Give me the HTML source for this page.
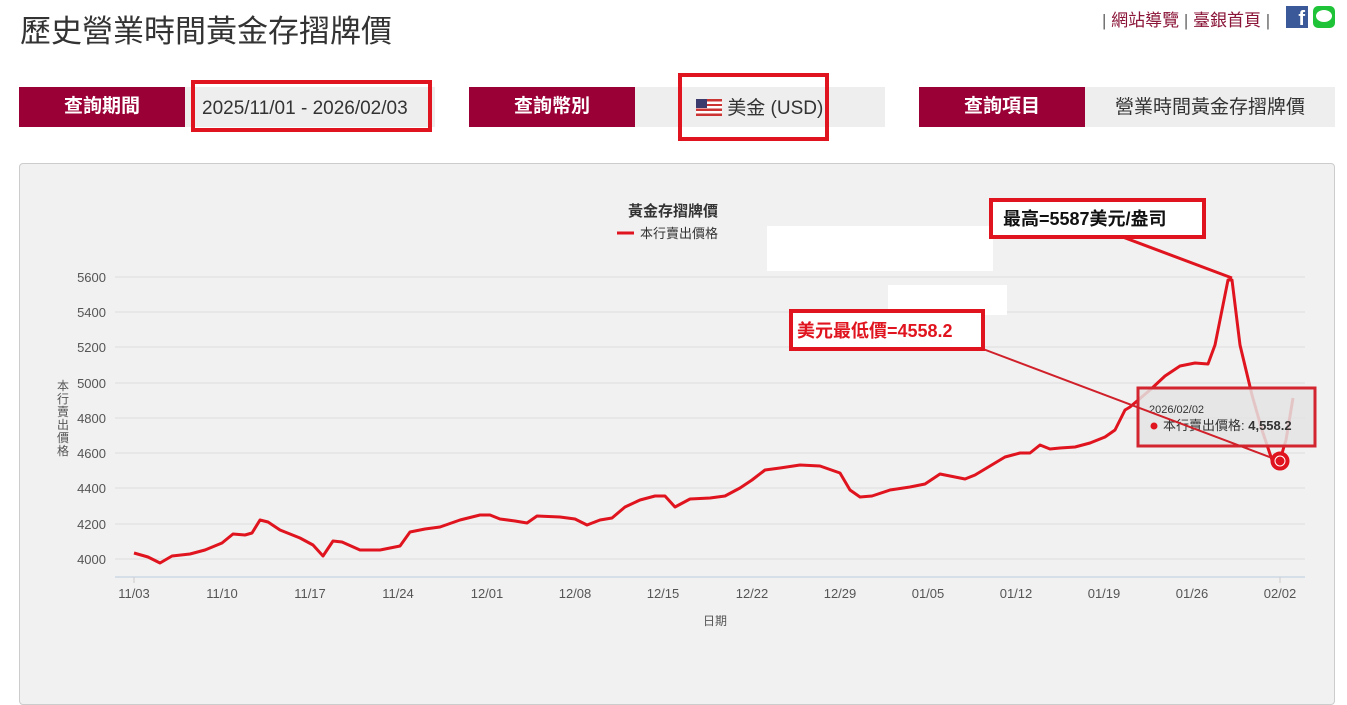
<!DOCTYPE html>
<html><head><meta charset="utf-8"><style>
body{margin:0;width:1347px;height:684px;overflow:hidden;background:#fff;font-family:"Liberation Sans","Noto Sans CJK TC",sans-serif;position:relative}
.a{position:absolute}
.btn{background:#9a0036;color:#fff;font-weight:bold;font-size:19px;text-align:center;line-height:40px;height:40px;width:166px;top:87px}
.fld{background:#eee;height:40px;top:87px;line-height:40px;font-size:19px;color:#333}
.rb{border:4px solid #e0141e;box-sizing:border-box}
</style></head><body>
<div class="a" style="left:20px;top:6px;font-size:31px;color:#333">歷史營業時間黃金存摺牌價</div>
<div class="a" style="left:1102px;top:6px;font-size:17px;color:#8a1538"><span style="color:#666">|</span> 網站導覽 <span style="color:#666">|</span> 臺銀首頁 <span style="color:#666">|</span></div>
<div class="a" style="left:1286px;top:6px;width:22px;height:22px;background:#3b5998;color:#fff;font-weight:bold;font-size:20px;text-align:right;line-height:26px;box-sizing:border-box;padding-right:3px">f</div>
<div class="a" style="left:1313px;top:6px;width:22px;height:22px;background:#1ec337;border-radius:5px"><div style="position:absolute;left:3px;top:4px;width:16px;height:12px;background:#fff;border-radius:50%"></div></div>

<div class="a btn" style="left:19px">查詢期間</div>
<div class="a fld" style="left:185px;width:250px"></div>
<div class="a rb" style="left:191px;top:80px;width:241px;height:52px;font-size:19px;color:#333;line-height:50px;padding-left:7px">2025/11/01 - 2026/02/03</div>
<div class="a btn" style="left:469px">查詢幣別</div>
<div class="a fld" style="left:635px;width:250px"></div>
<div class="a rb" style="left:678px;top:73px;width:151px;height:68px;font-size:19px;color:#333;line-height:64px;padding-left:14px"><span style="display:inline-block;width:26px;height:17px;vertical-align:-2px;background:repeating-linear-gradient(#c33 0 2.4px,#fff 2.4px 4.8px);position:relative"><span style="position:absolute;left:0;top:0;width:11px;height:9px;background:#3c3b6e"></span></span> 美金 (USD)</div>
<div class="a btn" style="left:919px">查詢項目</div>
<div class="a fld" style="left:1085px;width:250px;text-align:center;line-height:42px">營業時間黃金存摺牌價</div>

<div class="a" style="left:19px;top:163px;width:1314px;height:540px;background:#f1f1f1;border:1px solid #ccc;border-radius:4px"></div>
<svg class="a" style="left:0;top:0" width="1347" height="684">
<g font-family="Liberation Sans,Noto Sans CJK TC,sans-serif">
<text x="673" y="216" text-anchor="middle" font-size="15" font-weight="bold" fill="#333">黃金存摺牌價</text>
<line x1="617" y1="233" x2="634" y2="233" stroke="#e0141e" stroke-width="3"/>
<text x="640" y="238" font-size="13" fill="#333">本行賣出價格</text>
<g stroke="#ddd" stroke-width="1">
<line x1="115" y1="277" x2="1305" y2="277"/><line x1="115" y1="312" x2="1305" y2="312"/><line x1="115" y1="347" x2="1305" y2="347"/><line x1="115" y1="383" x2="1305" y2="383"/><line x1="115" y1="418" x2="1305" y2="418"/><line x1="115" y1="453" x2="1305" y2="453"/><line x1="115" y1="488" x2="1305" y2="488"/><line x1="115" y1="524" x2="1305" y2="524"/><line x1="115" y1="559" x2="1305" y2="559"/>
</g>
<line x1="115" y1="577" x2="1305" y2="577" stroke="#bcd" />
<g font-size="13" fill="#555" text-anchor="end">
<text x="106" y="282">5600</text><text x="106" y="317">5400</text><text x="106" y="352">5200</text><text x="106" y="388">5000</text><text x="106" y="423">4800</text><text x="106" y="458">4600</text><text x="106" y="493">4400</text><text x="106" y="529">4200</text><text x="106" y="564">4000</text>
</g>
<g font-size="13" fill="#555" text-anchor="middle">
<text x="134" y="598">11/03</text><text x="222" y="598">11/10</text><text x="310" y="598">11/17</text><text x="398" y="598">11/24</text><text x="487" y="598">12/01</text><text x="575" y="598">12/08</text><text x="663" y="598">12/15</text><text x="752" y="598">12/22</text><text x="840" y="598">12/29</text><text x="928" y="598">01/05</text><text x="1016" y="598">01/12</text><text x="1104" y="598">01/19</text><text x="1192" y="598">01/26</text><text x="1280" y="598">02/02</text>
<text x="715" y="625" font-size="12">日期</text>
</g>
<g font-size="12" fill="#555" text-anchor="middle"><text x="63" y="390">本</text><text x="63" y="403">行</text><text x="63" y="416">賣</text><text x="63" y="429">出</text><text x="63" y="442">價</text><text x="63" y="455">格</text></g>
<g stroke="#ccc"><line x1="134" y1="577" x2="134" y2="583"/><line x1="1280" y1="577" x2="1280" y2="583"/></g>
<polyline fill="none" stroke="#e0141e" stroke-width="3" stroke-linejoin="round" points="134,553 148,557 160,563 172,556 190,554 205,550 222,543 233,534 245,535 252,533 260,520 268,522 280,530 300,538 313,545 323,556 333,541 342,542 360,550 380,550 400,546 410,532 425,529 440,527 460,520 480,515 490,515 500,519 515,521 527,523 537,516 560,517 575,519 587,525 600,520 612,518 625,507 640,500 655,496 665,496 675,507 690,499 710,498 725,496 740,488 752,480 765,470 780,468 800,465 820,466 840,473 850,490 860,497 872,496 890,490 910,487 925,484 940,474 950,476 965,479 975,475 990,466 1005,457 1020,453 1030,453 1040,445 1050,449 1060,448 1075,447 1090,443 1105,437 1115,430 1125,410 1130,407 1150,390 1165,376 1180,366 1195,363 1208,364 1215,345 1222,310 1228,280 1232,280 1240,345 1252,395 1262,430 1272,460 1280,460 1286,440 1293,398"/>
<rect x="767" y="226" width="226" height="45" fill="#fff"/>
<rect x="888" y="285" width="119" height="30" fill="#fff"/>
<rect x="1138" y="388" width="177" height="58" fill="#e4e4e4" fill-opacity="0.85" stroke="#d32530" stroke-width="3"/>
<text x="1149" y="413" font-size="11" fill="#333">2026/02/02</text>
<circle cx="1154" cy="426" r="3.5" fill="#e0141e"/>
<text x="1163" y="430" font-size="13" fill="#333">本行賣出價格: <tspan font-weight="bold">4,558.2</tspan></text>
<line x1="1120" y1="236" x2="1232" y2="278" stroke="#e0141e" stroke-width="3"/>
<line x1="983" y1="349" x2="1280" y2="461" stroke="#d0202a" stroke-width="2"/>
<circle cx="1280" cy="461" r="8" fill="#e0141e" stroke="#e0141e" stroke-width="3"/>
<circle cx="1280" cy="461" r="5" fill="none" stroke="#fff" stroke-width="1"/>
<rect x="991" y="200" width="213" height="37" fill="#fff" stroke="#e0141e" stroke-width="4"/>
<text x="1003" y="225" font-size="18" font-weight="bold" fill="#111">最高=5587美元/盎司</text>
<rect x="791" y="311" width="192" height="38" fill="#fff" stroke="#e0141e" stroke-width="4"/>
<text x="797" y="337" font-size="18" font-weight="bold" fill="#e0141e">美元最低價=4558.2</text>
</g></svg>
</body></html>
